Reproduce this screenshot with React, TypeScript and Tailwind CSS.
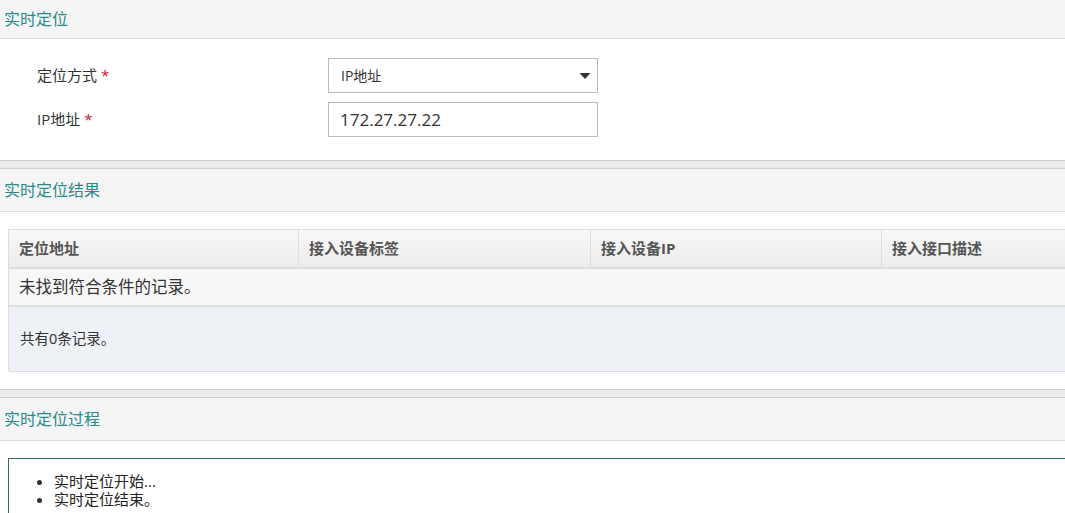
import { ReactNode } from "react";

const font = { fontFamily: '"Open Sans", "Noto Sans CJK SC", sans-serif' };

function PanelHeader({ title, tall }: { title: string; tall?: boolean }) {
  return (
    <div
      className={`flex items-center border-b border-[#dddddd] bg-[#f5f5f5] px-[4px] text-[16px] text-[#2a8a8c] ${
        tall ? "h-[43px]" : "h-[39px]"
      }`}
    >
      {title}
    </div>
  );
}

function Gap() {
  return <div className="h-[9px] border-y border-[#cfcfcf] bg-[#ececec]" />;
}

function FormRow({ label, children }: { label: string; children: ReactNode }) {
  return (
    <div className="flex items-center">
      <div className="w-[328px] pl-[37px] text-[15px] text-[#333]">
        {label} <span className="text-[#d0103a]">*</span>
      </div>
      {children}
    </div>
  );
}

export default function App() {
  const cols = [
    { name: "定位地址", w: "w-[289px]" },
    { name: "接入设备标签", w: "w-[292px]" },
    { name: "接入设备IP", w: "w-[291px]" },
    { name: "接入接口描述", w: "flex-1" },
  ];
  return (
    <div className="h-[513px] w-[1065px] overflow-hidden bg-white" style={font}>
      <PanelHeader title="实时定位" />
      <div className="flex flex-col gap-[9px] pb-[23px] pt-[19px]">
        <FormRow label="定位方式">
          <div className="flex h-[35px] w-[270px] items-center justify-between border border-[#bbbbbb] pl-[12px] pr-[6px] text-[14px] text-[#333]">
            <span>IP地址</span>
            <svg width="12" height="8" viewBox="0 0 12 8">
              <path d="M0.5 1 L11.5 1 L6 7 Z" fill="#333" />
            </svg>
          </div>
        </FormRow>
        <FormRow label="IP地址">
          <div className="flex h-[35px] w-[270px] items-center border border-[#bbbbbb] pl-[11px] text-[17px] text-[#333]">
            172.27.27.22
          </div>
        </FormRow>
      </div>
      <Gap />
      <PanelHeader title="实时定位结果" tall />
      <div className="pb-[17px] pl-[8px] pt-[17px]">
        <div className="w-[1070px] rounded-bl-[3px] border-b border-l border-t border-[#dddddd]">
          <div className="flex h-[39px] border-b-2 border-[#dddddd] bg-gradient-to-b from-[#f8f8f8] to-[#ececec] text-[15px] font-bold text-[#555]">
            {cols.map((c, i) => (
              <div
                key={c.name}
                className={`flex items-center px-[10px] ${c.w} ${i > 0 ? "border-l border-[#dddddd]" : ""}`}
              >
                {c.name}
              </div>
            ))}
          </div>
          <div className="flex h-[38px] items-center border-b-2 border-[#dddddd] bg-[#f7f7f7] px-[10px] text-[16.5px] text-[#333]">
            未找到符合条件的记录。
          </div>
          <div className="flex h-[64px] items-center bg-[#eef1f6] px-[11px] text-[14.5px] text-[#333]">
            共有0条记录。
          </div>
        </div>
      </div>
      <Gap />
      <PanelHeader title="实时定位过程" tall />
      <div className="pl-[8px] pt-[17px]">
        <div className="h-[80px] w-[1070px] border border-[#2f6b6b] pl-[45px] pt-[13px]">
          <ul className="list-disc text-[15px] leading-[18px] text-[#222] marker:text-[#333]">
            <li>实时定位开始...</li>
            <li>实时定位结束。</li>
          </ul>
        </div>
      </div>
    </div>
  );
}
